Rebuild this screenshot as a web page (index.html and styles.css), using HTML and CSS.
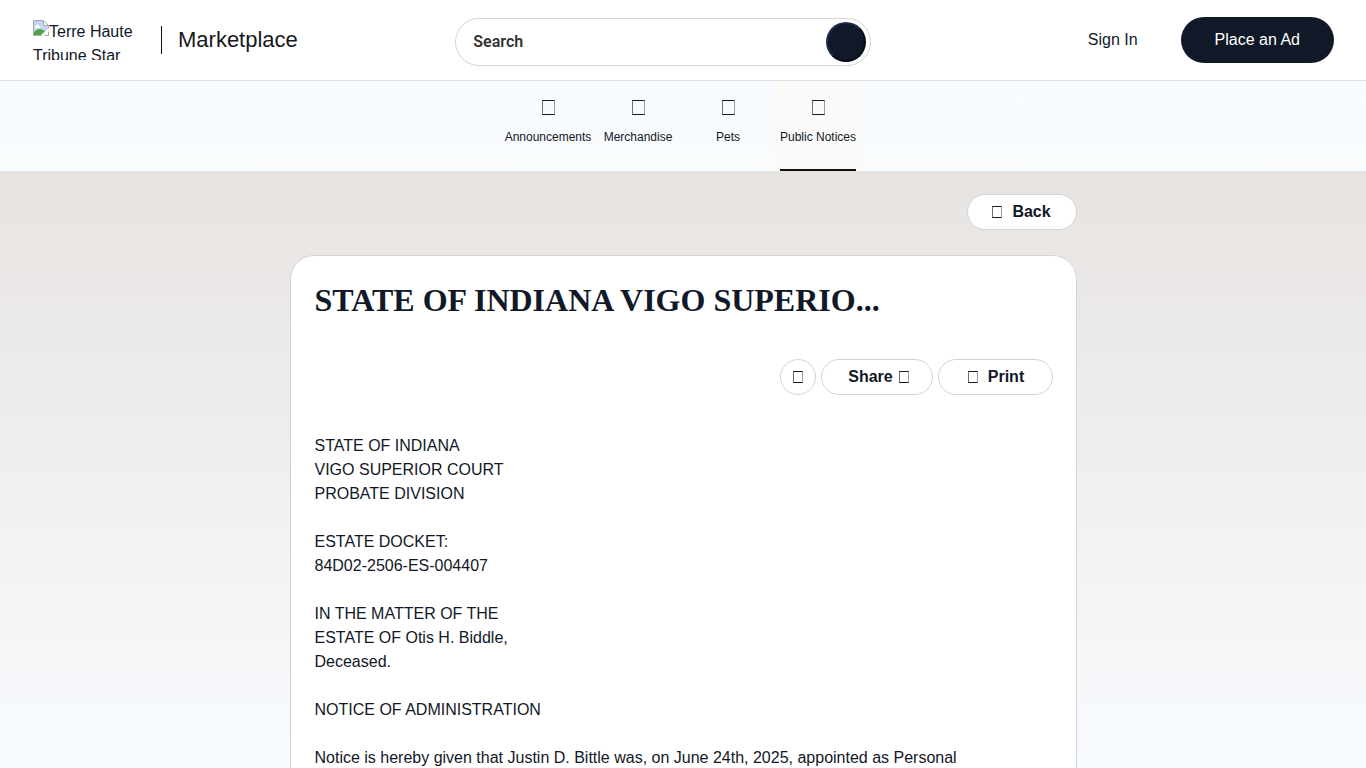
FILE: index.html
```html
<!DOCTYPE html>
<html lang="en">
<head>
<meta charset="utf-8">
<title>Marketplace - Public Notices</title>
<link rel="stylesheet" href="styles.css">
</head>
<body>
<header class="header">
  <div class="brand">
    <a class="logo" href="#"><svg class="logo-icon" viewBox="0 0 16 16" aria-hidden="true"><path d="M.5.5h10l5 5v10H.5z" fill="#fff" stroke="#a6a8ac"/><path d="M1 1h9v5h5v4l-5 5H1z" fill="#c3d5f4"/><path d="M3 6c0-2 3-2 3 0 2 0 2 2 0 2H3C1 8 1 6 3 6z" fill="#fff"/><path d="M1 15v-3c3-3 6-4 9-2l2 1-4 4z" fill="#52a544"/><path d="M10.500.5v5h5z" fill="#fff" stroke="#a6a8ac"/><path d="M8 16l8-8v3l-5 5z" fill="#fff"/></svg>Terre Haute Tribune Star</a>
    <a class="site-name" href="#">Marketplace</a>
  </div>
  <form class="search">
    <input class="search-input" type="text" placeholder="Search" aria-label="Search">
    <button class="search-button" type="button" aria-label="Submit search"></button>
  </form>
  <div class="account">
    <a class="sign-in" href="#">Sign In</a>
    <a class="place-ad" href="#">Place an Ad</a>
  </div>
</header>
<nav class="categories" aria-label="Categories">
  <a class="category" href="#"><span class="glyph glyph-large"></span><span class="category-label">Announcements</span></a>
  <a class="category" href="#"><span class="glyph glyph-large"></span><span class="category-label">Merchandise</span></a>
  <a class="category" href="#"><span class="glyph glyph-large"></span><span class="category-label">Pets</span></a>
  <a class="category category-active" href="#"><span class="glyph glyph-large"></span><span class="category-label">Public Notices</span></a>
</nav>
<main class="main">
  <div class="container">
    <div class="toolbar"><button class="pill back" type="button"><span class="glyph"></span>Back</button></div>
    <article class="card">
      <h1 class="title">STATE OF INDIANA VIGO SUPERIO...</h1>
      <div class="actions">
        <button class="pill favorite" type="button" aria-label="Save"><span class="glyph"></span></button>
        <button class="pill share" type="button">Share<span class="glyph"></span></button>
        <button class="pill print" type="button"><span class="glyph"></span>Print</button>
      </div>
      <p class="notice">STATE OF INDIANA<br>VIGO SUPERIOR COURT<br>PROBATE DIVISION<br><br>ESTATE DOCKET:<br>84D02-2506-ES-004407<br><br>IN THE MATTER OF THE<br>ESTATE OF Otis H. Biddle,<br>Deceased.<br><br>NOTICE OF ADMINISTRATION<br><br>Notice is hereby given that Justin D. Bittle was, on June 24th, 2025, appointed as Personal</p>
    </article>
  </div>
</main>
</body>
</html>
```

FILE: styles.css
```css
* {
  box-sizing: border-box;
}

body {
  margin: 0;
  height: 100vh;
  overflow: hidden;
  display: flex;
  flex-direction: column;
  color: #111827;
  font: 16px/24px "Liberation Sans", Arial, sans-serif;
}

a {
  color: inherit;
  text-decoration: none;
}

.header {
  flex: none;
  display: grid;
  grid-template-columns: 1fr 1fr 1fr;
  align-items: center;
  height: 81px;
  background: #fff;
  border-bottom: 1px solid #d9dee3;
}

.brand {
  display: flex;
  align-items: center;
  padding-left: 33px;
}

.logo {
  width: 112px;
  height: 40px;
  overflow: hidden;
}

.logo-icon {
  width: 16px;
  height: 16px;
  vertical-align: 1px;
}

.site-name {
  margin-left: 16px;
  padding-left: 16px;
  border-left: 1px solid #111;
  color: #18181b;
  font-size: 22px;
  line-height: 28px;
}

.search {
  display: flex;
  align-items: center;
  width: 416px;
  height: 48px;
  margin-top: 4px;
  padding: 0 4px 0 17px;
  border: 1px solid #d4d4d8;
  border-radius: 24px;
  background: #fff;
}

.search-input {
  flex: 1;
  min-width: 0;
  padding: 0;
  border: 0;
  outline: 0;
  background: transparent;
  font: 600 16px/24px Roboto, sans-serif;
}

.search-input::placeholder {
  color: #333;
  opacity: 1;
}

.search-button {
  width: 40px;
  height: 40px;
  border: 2px solid;
  border-color: #1e2c4c #080c14 #080c14 #1e2c4c;
  border-radius: 50%;
  background: #111827;
}

.account {
  display: flex;
  justify-content: flex-end;
  align-items: center;
  gap: 43px;
  padding-right: 32px;
}

.place-ad {
  padding: 11px 34px;
  border-radius: 24px;
  background: #111827;
  color: #fff;
}

.categories {
  flex: none;
  display: flex;
  justify-content: center;
  height: 90px;
  background: linear-gradient(#f7fbff, #f9fbfc);
}

.category {
  display: flex;
  flex-direction: column;
  align-items: center;
  width: 90px;
  padding-top: 19px;
  font-size: 12px;
  line-height: 16px;
}

.category-label {
  flex: 1;
  margin-top: 14px;
  white-space: nowrap;
}

.category-active {
  background: #fafaf9;
}

.category-active .category-label {
  border-bottom: 2px solid #111;
}

.glyph {
  display: inline-block;
  width: 10px;
  height: 12px;
  border: 1px solid #111827;
  border-right-color: #9a9ea6;
  border-left-color: #6b7079;
}

.glyph-large {
  width: 13px;
  height: 15px;
}

.main {
  flex: 1;
  min-height: 0;
  padding-top: 23px;
  background: linear-gradient(#e7e3e0, #ebe9e8 25%, #f8fbfe);
}

.container {
  max-width: 787px;
  margin: 0 auto;
}

.toolbar {
  display: flex;
  justify-content: flex-end;
}

.pill {
  display: flex;
  align-items: center;
  justify-content: center;
  height: 36px;
  padding: 0;
  border: 1px solid #d4d4d8;
  border-radius: 18px;
  background: #fff;
  color: #111827;
  font: bold 16px/24px "Liberation Sans", Arial, sans-serif;
}

.back {
  gap: 10px;
  width: 110px;
}

.card {
  margin-top: 25px;
  padding: 24px 23px 24px 24px;
  border: 1px solid #d4d4d8;
  border-radius: 24px;
  background: #fff;
}

.title {
  margin: 0;
  font: bold 32px/40px "Liberation Serif", "Times New Roman", serif;
}

.actions {
  display: flex;
  justify-content: flex-end;
  gap: 5px;
  margin-top: 39px;
}

.favorite {
  width: 36px;
}

.share {
  gap: 6px;
  width: 112px;
  padding-left: 4px;
}

.print {
  gap: 10px;
  width: 115px;
  padding-left: 2px;
}

.notice {
  margin: 39px 0 0;
}
```
